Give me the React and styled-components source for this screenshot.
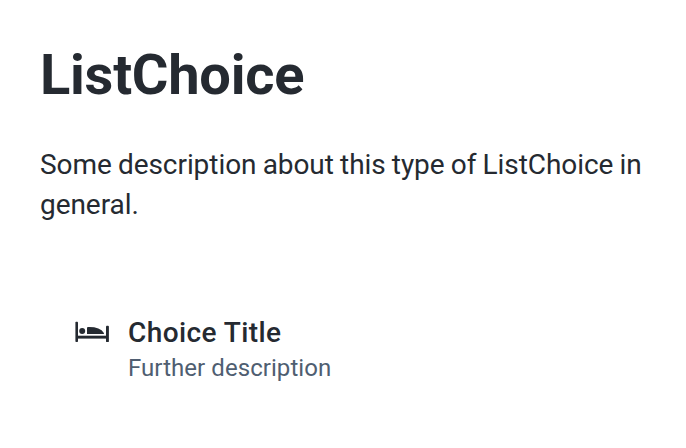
import React from "react";
import styled, { createGlobalStyle } from "styled-components";

const GlobalStyle = createGlobalStyle`
  * { box-sizing: border-box; margin: 0; }
  body { margin: 0; background: #fff; font-family: Roboto, sans-serif; color: #252a31; }
`;
const Page = styled.main`
  padding: 40px;
`;
const Title = styled.h1`
  font-size: 56px;
  font-weight: 700;
  line-height: 70px;
  letter-spacing: -0.25px;
`;
const Description = styled.p`
  margin-top: 35px;
  font-size: 28px;
  line-height: 40px;
  letter-spacing: -0.06px;
  word-spacing: -0.7px;
`;
const Choice = styled.div`
  display: flex;
  align-items: center;
  margin-top: 72px;
  padding: 16px 32px;
`;
const ChoiceIcon = styled.svg`
  width: 40px;
  height: 40px;
  margin-right: 16px;
  align-self: flex-start;
  fill: currentColor;
`;
const ChoiceTitle = styled.div`
  font-size: 28px;
  font-weight: 500;
  line-height: 40px;
  letter-spacing: 0.42px;
`;
const ChoiceDescription = styled.div`
  margin-top: -1px;
  font-size: 24px;
  line-height: 32px;
  letter-spacing: 0.06px;
  color: #4f5e71;
`;

export default function App() {
  return (
    <Page>
      <GlobalStyle />
      <Title>ListChoice</Title>
      <Description>Some description about this type of ListChoice in general.</Description>
      <Choice>
        <ChoiceIcon viewBox="0 0 40 40" aria-hidden="true">
          <rect x="3.4" y="8.8" width="2.6" height="20.3" rx="0.8" />
          <rect x="34" y="12.8" width="2.9" height="16.3" rx="0.9" />
          <rect x="5" y="22.7" width="30" height="2.9" />
          <circle cx="10.2" cy="18" r="3" />
          <path d="M16 14.1Q28 13.8 31.9 20V21H15V15Q15 14.1 16 14.1Z" />
        </ChoiceIcon>
        <div>
          <ChoiceTitle>Choice Title</ChoiceTitle>
          <ChoiceDescription>Further description</ChoiceDescription>
        </div>
      </Choice>
    </Page>
  );
}
